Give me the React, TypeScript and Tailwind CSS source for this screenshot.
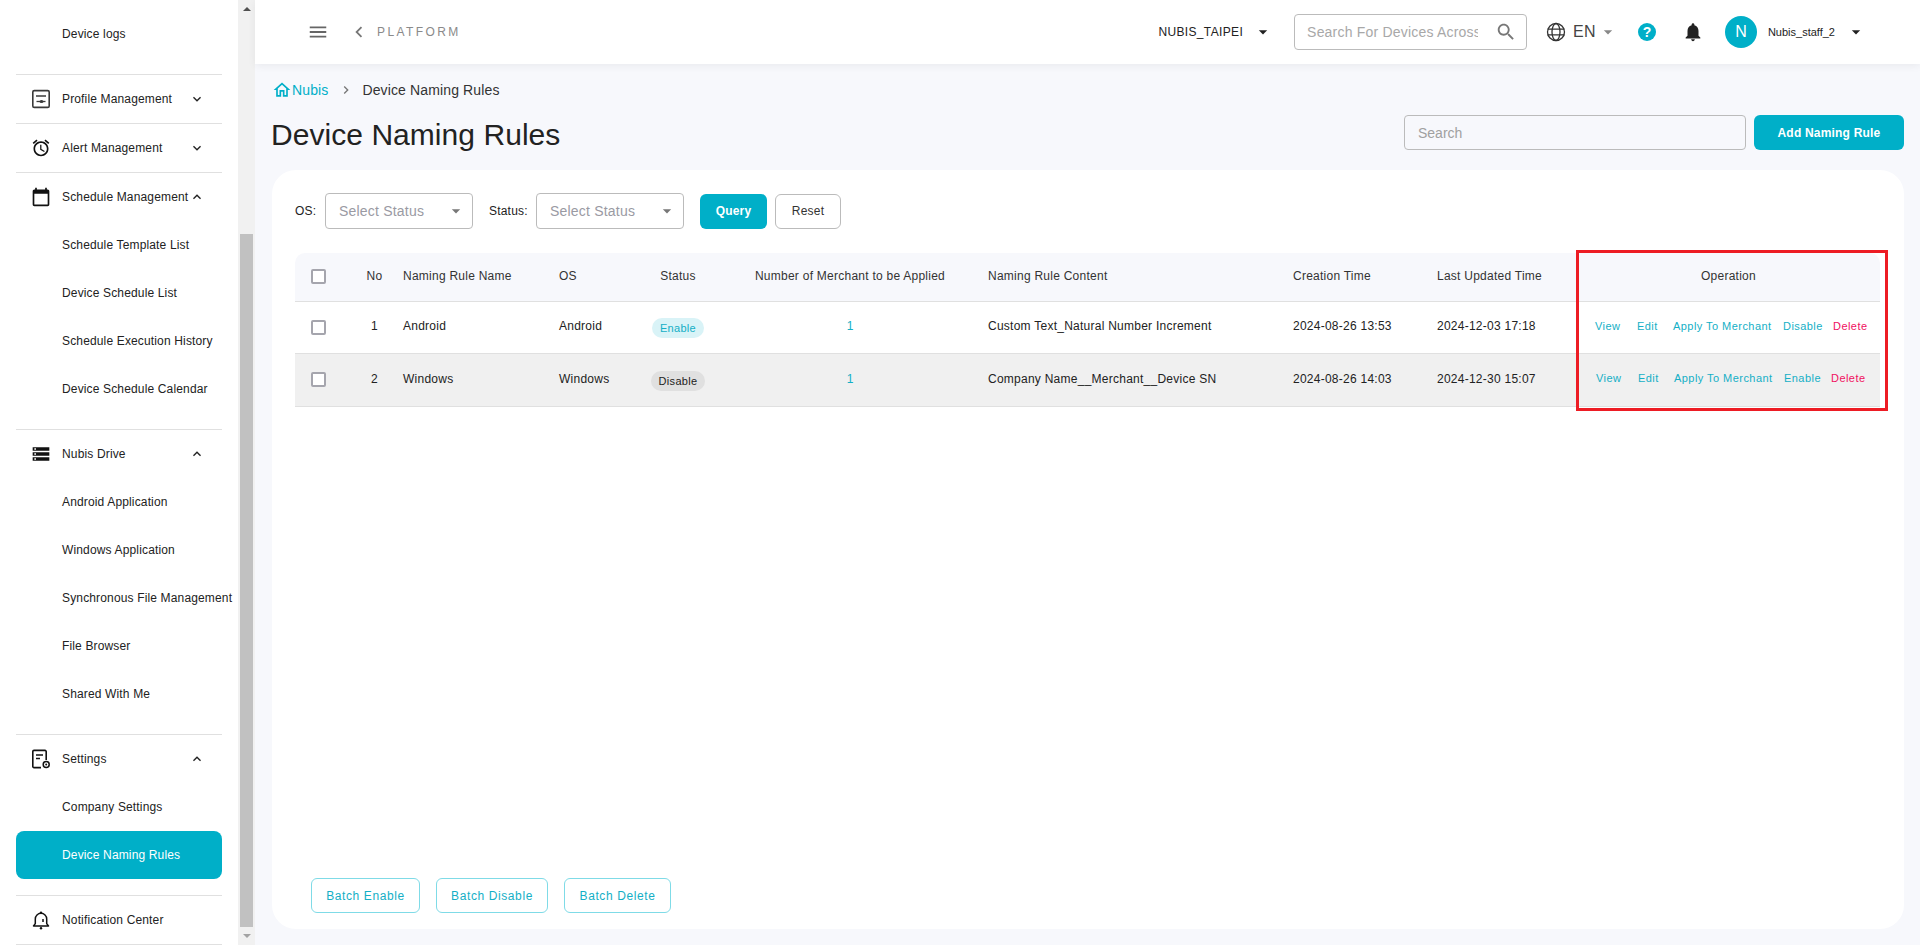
const P = {
  more: "M16.59 8.59 12 13.17 7.41 8.59 6 10l6 6 6-6z",
  less: "m12 8-6 6 1.41 1.41L12 10.83l4.59 4.58L18 14z",
  alarm: "m22 5.72-4.6-3.86-1.29 1.53 4.6 3.86zM7.88 3.39 6.6 1.86 2 5.71l1.29 1.53zM12.5 8H11v6l4.75 2.85.75-1.23-4-2.37zM12 4c-4.97 0-9 4.03-9 9s4.02 9 9 9c4.97 0 9-4.03 9-9s-4.03-9-9-9m0 16c-3.87 0-7-3.13-7-7s3.13-7 7-7 7 3.13 7 7-3.13 7-7 7",
  calendar: "M20 3h-1V1h-2v2H7V1H5v2H4c-1.1 0-2 .9-2 2v16c0 1.1.9 2 2 2h16c1.1 0 2-.9 2-2V5c0-1.1-.9-2-2-2zm0 18H4V8h16v13z",
  storage: "M2 20h20v-4H2v4zm2-3h2v2H4v-2zM2 4v4h20V4H2zm4 3H4V5h2v2zm-4 7h20v-4H2v4zm2-3h2v2H4v-2z",
  bell: "M12 22c1.1 0 2-.9 2-2h-4c0 1.1.89 2 2 2zm6-6v-5c0-3.07-1.64-5.64-4.5-6.32V4c0-.83-.67-1.5-1.5-1.5s-1.5.67-1.5 1.5v.68C7.63 5.36 6 7.92 6 11v5l-2 2v1h16v-1l-2-2z",
  menu: "M3 18h18v-2H3v2zm0-5h18v-2H3v2zm0-7v2h18V6H3z",
  home: "M12 5.69l5 4.5V18h-2v-6H9v6H7v-7.81l5-4.5M12 3L2 12h3v8h6v-6h2v6h6v-8h3L12 3z",
  caret: "M7 10l5 5 5-5z",
  left: "M15.41 7.41 14 6l-6 6 6 6 1.41-1.41L10.83 12z",
  right: "M10 6 8.59 7.41 13.17 12l-4.58 4.59L10 18l6-6z",
  search: "M15.5 14h-.79l-.28-.27C15.41 12.59 16 11.11 16 9.5 16 5.91 13.09 3 9.5 3S3 5.91 3 9.5 5.91 16 9.5 16c1.61 0 3.09-.59 4.23-1.57l.27.28v.79l5 4.99L20.49 19l-4.99-5zm-6 0C7.01 14 5 11.99 5 9.5S7.01 5 9.5 5 14 7.01 14 9.5 11.99 14 9.5 14z",
};

function Icon({ d, className }: { d: string; className?: string }) {
  return (
    <svg viewBox="0 0 24 24" fill="currentColor" className={className}>
      <path d={d} />
    </svg>
  );
}

function ProfileIcon() {
  return (
    <svg viewBox="0 0 20 20" className="w-5 h-5" fill="none">
      <rect x="1.8" y="1.6" width="16.4" height="16.8" rx="1.5" stroke="#3a3a3a" strokeWidth="1.6" />
      <path d="M5 7h10" stroke="#3a3a3a" strokeWidth="1.5" />
      <path d="M5.5 12.5h9" stroke="#3a3a3a" strokeWidth="1.3" />
      <ellipse cx="10.5" cy="12.5" rx="2" ry="1.6" fill="#3a3a3a" />
    </svg>
  );
}

function SettingsIcon() {
  return (
    <svg viewBox="0 0 20 20" className="w-5 h-5" fill="none">
      <path d="M10 18.6H3a1.2 1.2 0 0 1-1.2-1.2V2.6A1.2 1.2 0 0 1 3 1.4h11a1.2 1.2 0 0 1 1.2 1.2V11" stroke="#111" strokeWidth="1.6" />
      <path d="M5 6h7M5 9.5h4" stroke="#111" strokeWidth="1.5" />
      <circle cx="15.2" cy="15.6" r="3" stroke="#111" strokeWidth="1.5" />
      <circle cx="15.2" cy="15.6" r="1" fill="#111" />
    </svg>
  );
}

function NotifyIcon() {
  return (
    <svg viewBox="0 0 20 20" className="w-5 h-5" fill="none">
      <path d="M2.5 16h15l-1.8-2.4V9a5.7 5.7 0 0 0-11.4 0v4.6z" stroke="#111" strokeWidth="1.5" strokeLinejoin="round" />
      <circle cx="10" cy="2.6" r="1.2" fill="#111" />
      <circle cx="10" cy="18.3" r="1.2" fill="#111" />
      <path d="M12 9v3" stroke="#111" strokeWidth="1.5" />
    </svg>
  );
}

function Divider() {
  return <div className="h-[1px] bg-[#e0e0e0] mx-[16px]" />;
}

function Group({ icon, label, open, noArrow }: { icon: React.ReactNode; label: string; open?: boolean; noArrow?: boolean }) {
  return (
    <div className="h-[48px] flex items-center text-[12px] tracking-[0.15px] text-[#222]">
      <div className="w-[62px] flex justify-end pr-[11px] shrink-0">{icon}</div>
      <span className="w-[128px] whitespace-nowrap">{label}</span>
      {!noArrow && <Icon d={open ? P.less : P.more} className="w-[16px] h-[16px] -ml-[1px] text-[#222]" />}
    </div>
  );
}

function Item({ label, active }: { label: string; active?: boolean }) {
  if (active) {
    return (
      <div className="h-[48px] mx-[16px] pl-[46px] flex items-center rounded-[8px] bg-[#00afc8] text-white text-[12px] tracking-[0.15px] font-medium whitespace-nowrap">
        {label}
      </div>
    );
  }
  return <div className="h-[48px] pl-[62px] flex items-center text-[12px] tracking-[0.15px] text-[#222] whitespace-nowrap">{label}</div>;
}

function Sidebar() {
  return (
    <aside className="w-[255px] h-[945px] shrink-0 flex bg-white overflow-hidden">
      <div className="w-[238px] shrink-0">
        <div className="pt-[10px] pb-[16px]">
          <Item label="Device logs" />
        </div>
        <Divider />
        <Group icon={<ProfileIcon />} label="Profile Management" />
        <Divider />
        <Group icon={<Icon d={P.alarm} className="w-[20px] h-[20px] text-[#111]" />} label="Alert Management" />
        <Divider />
        <Group icon={<Icon d={P.calendar} className="w-[20px] h-[20px] text-[#111]" />} label="Schedule Management" open />
        <Item label="Schedule Template List" />
        <Item label="Device Schedule List" />
        <Item label="Schedule Execution History" />
        <Item label="Device Schedule Calendar" />
        <div className="h-[16px]" />
        <Divider />
        <Group icon={<Icon d={P.storage} className="w-[20px] h-[20px] text-[#111]" />} label="Nubis Drive" open />
        <Item label="Android Application" />
        <Item label="Windows Application" />
        <Item label="Synchronous File Management" />
        <Item label="File Browser" />
        <Item label="Shared With Me" />
        <div className="h-[16px]" />
        <Divider />
        <Group icon={<SettingsIcon />} label="Settings" open />
        <Item label="Company Settings" />
        <Item label="Device Naming Rules" active />
        <div className="h-[16px]" />
        <Divider />
        <Group icon={<NotifyIcon />} label="Notification Center" noArrow />
        <Divider />
      </div>
      <div className="w-[17px] shrink-0 bg-[#f1f1f1] flex flex-col items-center">
        <div className="h-[17px] flex items-center justify-center">
          <div className="w-0 h-0 border-x-[4px] border-x-transparent border-b-[4px] border-b-[#505050]" />
        </div>
        <div className="h-[217px]" />
        <div className="w-[13px] h-[693px] bg-[#c1c1c1]" />
        <div className="h-[17px] flex items-center justify-center">
          <div className="w-0 h-0 border-x-[4px] border-x-transparent border-t-[4px] border-t-[#a3a3a3]" />
        </div>
      </div>
    </aside>
  );
}

function Header() {
  return (
    <header className="h-[64px] bg-white shadow-[0_2px_8px_rgba(0,0,0,0.06)] flex items-center pl-[52px] pr-[54px] relative">
      <Icon d={P.menu} className="w-[22px] h-[22px] text-[#666]" />
      <Icon d={P.left} className="w-[22px] h-[22px] text-[#777] ml-[19px]" />
      <span className="ml-[7px] text-[12px] tracking-[2.4px] text-[#8a8a8a]">PLATFORM</span>
      <div className="ml-auto flex items-center">
        <span className="text-[12px] tracking-[0.35px] text-[#222] whitespace-nowrap">NUBIS_TAIPEI</span>
        <Icon d={P.caret} className="w-[20px] h-[20px] text-[#222] ml-[10px]" />
        <div className="ml-[21px] w-[233px] h-[36px] border border-[#bbb] rounded-[4px] flex items-center pl-[12px] pr-[9px]">
          <input
            placeholder="Search For Devices Across Merchants"
            className="w-[171px] text-[14px] tracking-[0.2px] outline-none placeholder:text-[#a8a8a8] bg-transparent"
          />
          <Icon d={P.search} className="w-[22px] h-[22px] text-[#777] ml-auto" />
        </div>
        <svg viewBox="0 0 20 20" className="w-[20px] h-[20px] ml-[19px]" fill="none" stroke="#333" strokeWidth="1.3">
          <circle cx="10" cy="10" r="8.5" />
          <ellipse cx="10" cy="10" rx="4" ry="8.5" />
          <path d="M1.5 7.2h17M1.5 12.8h17" />
        </svg>
        <span className="ml-[7px] text-[16px] tracking-[0.3px] text-[#444]">EN</span>
        <Icon d={P.caret} className="w-[20px] h-[20px] text-[#888] ml-[2px]" />
        <div className="ml-[20px] w-[18px] h-[18px] rounded-full bg-[#00afc8] text-white text-[14px] font-bold flex items-center justify-center">?</div>
        <Icon d={P.bell} className="w-[22px] h-[22px] text-[#222] ml-[26px]" />
        <div className="ml-[21px] w-[32px] h-[32px] rounded-full bg-[#00afc8] text-white text-[16px] font-medium flex items-center justify-center">N</div>
        <span className="ml-[11px] text-[11px] text-[#222] whitespace-nowrap">Nubis_staff_2</span>
        <Icon d={P.caret} className="w-[20px] h-[20px] text-[#222] ml-[11px]" />
      </div>
    </header>
  );
}

const cols = ["w-[57px]", "w-[45px]", "w-[156px]", "w-[85px]", "w-[80px]", "w-[264px]", "w-[305px]", "w-[144px]", "w-[146px]", "w-[303px]"];
const th = "font-normal text-[12px] tracking-[0.25px] text-[#333] px-[6px] pb-[2px]";
const td = "text-[12px] tracking-[0.25px] text-[#222] px-[6px] pb-[2px]";

function Check() {
  return <div className="w-[15px] h-[15px] ml-[16px] border-2 border-[#a5a5ad] rounded-[2px] bg-white" />;
}

function Operations({ toggle, shift }: { toggle: string; shift?: boolean }) {
  const link = "text-[11px] tracking-[0.45px] text-[#14afc6] font-medium whitespace-nowrap";
  return (
    <div className={`flex items-center pb-[2px] ${shift ? "pl-[19px]" : "pl-[18px]"}`}>
      <span className={`${link} w-[42px]`}>View</span>
      <span className={`${link} w-[36px]`}>Edit</span>
      <span className={`${link} w-[110px]`}>Apply To Merchant</span>
      <span className={`${link} ${shift ? "w-[47px]" : "w-[50px]"}`}>{toggle}</span>
      <span className="text-[11px] tracking-[0.45px] text-[#f0105f] font-medium">Delete</span>
    </div>
  );
}

function Table() {
  return (
    <div className="relative">
      <table className="table-fixed border-collapse w-[1585px]">
        <colgroup>
          {cols.map((c, i) => (
            <col key={i} className={c} />
          ))}
        </colgroup>
        <thead>
          <tr className="h-[48px] bg-[#f7f8fc] border-b border-[#e0e0e0]">
            <th className="rounded-tl-[10px]"><Check /></th>
            <th className={`${th} text-center`}>No</th>
            <th className={`${th} text-left`}>Naming Rule Name</th>
            <th className={`${th} text-left`}>OS</th>
            <th className={`${th} text-center`}>Status</th>
            <th className={`${th} text-center`}>Number of Merchant to be Applied</th>
            <th className={`${th} text-left`}>Naming Rule Content</th>
            <th className={`${th} text-left`}>Creation Time</th>
            <th className={`${th} text-left`}>Last Updated Time</th>
            <th className={`${th} text-center rounded-tr-[10px]`}>Operation</th>
          </tr>
        </thead>
        <tbody>
          <tr className="h-[52px] bg-white border-b border-[#e0e0e0]">
            <td><Check /></td>
            <td className={`${td} text-center`}>1</td>
            <td className={td}>Android</td>
            <td className={td}>Android</td>
            <td className="text-center">
              <span className="inline-flex items-center justify-center w-[52px] h-[20px] rounded-full bg-[#d9f3f7] text-[#14afc6] text-[11px] tracking-[0.3px] font-medium">Enable</span>
            </td>
            <td className="text-center text-[12px] text-[#14afc6] pb-[2px]">1</td>
            <td className={td}>Custom Text_Natural Number Increment</td>
            <td className={td}>2024-08-26 13:53</td>
            <td className={td}>2024-12-03 17:18</td>
            <td><Operations toggle="Disable" /></td>
          </tr>
          <tr className="h-[53px] bg-[#f0f0f0] border-b border-[#e0e0e0]">
            <td><Check /></td>
            <td className={`${td} text-center`}>2</td>
            <td className={td}>Windows</td>
            <td className={td}>Windows</td>
            <td className="text-center">
              <span className="inline-flex items-center justify-center w-[54px] h-[20px] rounded-full bg-[#e0e0e0] text-[#222] text-[11px] tracking-[0.3px] font-medium">Disable</span>
            </td>
            <td className="text-center text-[12px] text-[#14afc6] pb-[2px]">1</td>
            <td className={td}>Company Name__Merchant__Device SN</td>
            <td className={td}>2024-08-26 14:03</td>
            <td className={td}>2024-12-30 15:07</td>
            <td><Operations toggle="Enable" shift /></td>
          </tr>
        </tbody>
      </table>
      <div className="absolute left-[1281px] -top-[3px] w-[312px] h-[161px] border-[3px] border-[#ed1c24] pointer-events-none" />
    </div>
  );
}

function Select() {
  return (
    <div className="w-[148px] h-[36px] border border-[#bbb] rounded-[4px] flex items-center pl-[13px] pr-[6px] bg-white">
      <span className="text-[14px] tracking-[0.2px] text-[#9a9aa3] whitespace-nowrap">Select Status</span>
      <Icon d={P.caret} className="w-[20px] h-[20px] text-[#777] ml-auto" />
    </div>
  );
}

export default function App() {
  return (
    <div className="w-[1920px] h-[945px] flex overflow-hidden bg-[#f7f8fc] text-[#222] font-['Liberation_Sans',Arial,sans-serif]">
      <Sidebar />
      <main className="flex-1 min-w-0">
        <Header />
        <div className="pl-[17px] pr-[16px]">
          <div className="flex items-center h-[20px] mt-[16px] text-[14px] tracking-[0.13px]">
            <Icon d={P.home} className="w-[20px] h-[20px] text-[#00afc8]" />
            <span className="text-[#00afc8]">Nubis</span>
            <Icon d={P.right} className="w-[16px] h-[16px] text-[#777] ml-[10px]" />
            <span className="ml-[8px] text-[#333]">Device Naming Rules</span>
          </div>
          <div className="flex items-start mt-[15px] h-[40px]">
            <h1 className="text-[30px] leading-[40px] text-[#222] font-normal ml-[-1px] tracking-[0.05px]">Device Naming Rules</h1>
            <input
              placeholder="Search"
              className="ml-auto w-[342px] h-[35px] border border-[#bbb] rounded-[4px] px-[13px] text-[14px] bg-transparent outline-none placeholder:text-[#a0a0a0]"
            />
            <button className="ml-[8px] w-[150px] h-[35px] rounded-[6px] bg-[#00afc8] text-white text-[12px] tracking-[0.2px] font-bold">Add Naming Rule</button>
          </div>
          <section className="mt-[15px] h-[759px] bg-white rounded-[24px] pl-[23px] pr-[22px] pt-[23px] flex flex-col w-[1632px]">
            <div className="flex items-center text-[12px] tracking-[0.2px]">
              <span className="w-[30px]">OS:</span>
              <Select />
              <span className="ml-[16px] w-[47px]">Status:</span>
              <Select />
              <button className="ml-[16px] w-[67px] h-[35px] rounded-[6px] bg-[#00afc8] text-white text-[12px] font-bold">Query</button>
              <button className="ml-[8px] w-[66px] h-[35px] rounded-[6px] border border-[#bbb] text-[#333] text-[12px] font-medium bg-white">Reset</button>
            </div>
            <div className="mt-[24px]">
              <Table />
            </div>
            <div className="mt-auto mb-[16px] ml-[16px] flex gap-[16px]">
              <button className="w-[109px] h-[35px] rounded-[6px] border border-[#7fdbe7] text-[#14afc6] text-[12px] tracking-[0.6px]">Batch Enable</button>
              <button className="w-[112px] h-[35px] rounded-[6px] border border-[#7fdbe7] text-[#14afc6] text-[12px] tracking-[0.6px]">Batch Disable</button>
              <button className="w-[107px] h-[35px] rounded-[6px] border border-[#7fdbe7] text-[#14afc6] text-[12px] tracking-[0.6px]">Batch Delete</button>
            </div>
          </section>
        </div>
      </main>
    </div>
  );
}
